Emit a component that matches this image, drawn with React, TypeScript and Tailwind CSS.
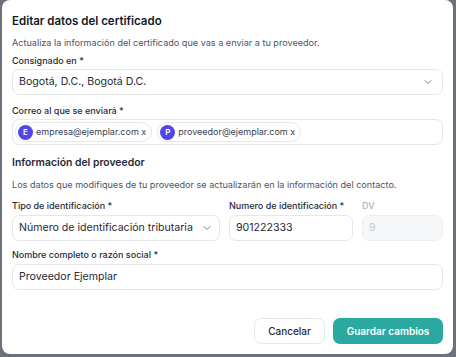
import React from 'react';

const ChevronDown = () => (
  <svg width="12" height="12" viewBox="0 0 24 24" fill="none" stroke="#6b7280" strokeWidth="1.8" strokeLinecap="round" strokeLinejoin="round">
    <path d="M6 9l6 6 6-6" />
  </svg>
);

const Chip = ({ letter, email }: { letter: string; email: string }) => (
  <div className="flex items-center gap-[3px] h-[20px] pl-[2px] pr-[5px] rounded-full border border-[#e5e7eb] bg-white">
    <span className="w-[15px] h-[15px] rounded-full bg-[#4f46e5] text-white text-[8px] font-semibold flex items-center justify-center">
      {letter}
    </span>
    <span className="text-[9px] text-[#374151]">{email} x</span>
  </div>
);

const Label = ({ children, muted }: { children: React.ReactNode; muted?: boolean }) => (
  <div className={`text-[9px] leading-[16px] font-medium ${muted ? 'text-[#b0b5bd]' : 'text-[#1f2937]'}`}>
    {children}
  </div>
);

export default function App() {
  return (
    <div className="w-[456px] h-[357px] bg-[#6c717a] overflow-hidden" style={{ fontFamily: 'Inter, "Noto Sans", sans-serif' }}>
      <div className="ml-[2px] w-[451px] h-[354px] bg-white rounded-[8px] px-[10px] pt-[11px] flex flex-col">
        <h2 className="text-[11.5px] leading-[20px] font-semibold text-[#111827]">Editar datos del certificado</h2>
        <p className="mt-[4px] text-[9.1px] leading-[16px] text-[#4b5563]">
          Actualiza la información del certificado que vas a enviar a tu proveedor.
        </p>

        <div className="mt-[2px]">
          <Label>Consignado en *</Label>
          <div className="h-[26px] border border-[#e5e7eb] rounded-[7px] flex items-center justify-between pl-[6px] pr-[8px]">
            <span className="text-[10.6px] text-[#1f2937]">Bogotá, D.C., Bogotá D.C.</span>
            <ChevronDown />
          </div>
        </div>

        <div className="mt-[8px]">
          <Label>Correo al que se enviará *</Label>
          <div className="h-[26px] border border-[#e5e7eb] rounded-[7px] flex items-center gap-[5px] pl-[2px]">
            <Chip letter="E" email="empresa@ejemplar.com" />
            <Chip letter="P" email="proveedor@ejemplar.com" />
          </div>
        </div>

        <h3 className="mt-[9px] text-[10.4px] leading-[18px] font-semibold text-[#1f2937]">Información del proveedor</h3>
        <p className="mt-[5px] text-[9.1px] leading-[16px] text-[#4b5563]">
          Los datos que modifiques de tu proveedor se actualizarán en la información del contacto.
        </p>

        <div className="mt-[5px] flex gap-[9px]">
          <div className="w-[208px]">
            <Label>Tipo de identificación *</Label>
            <div className="mt-px h-[26px] border border-[#e5e7eb] rounded-[7px] flex items-center justify-between pl-[6px] pr-[6px]">
              <span className="text-[10.6px] text-[#1f2937]">Número de identificación tributaria</span>
              <ChevronDown />
            </div>
          </div>
          <div className="w-[124px]">
            <Label>Numero de identificación *</Label>
            <div className="mt-px h-[26px] border border-[#e5e7eb] rounded-[7px] flex items-center pl-[6px]">
              <span className="text-[10.6px] text-[#1f2937]">901222333</span>
            </div>
          </div>
          <div className="flex-1">
            <Label muted>DV</Label>
            <div className="mt-px h-[26px] border border-[#eceef1] bg-[#f6f7f9] rounded-[7px] flex items-center pl-[6px]">
              <span className="text-[10.6px] text-[#c4c8ce]">9</span>
            </div>
          </div>
        </div>

        <div className="mt-[6px]">
          <Label>Nombre completo o razón social *</Label>
          <div className="mt-px h-[26px] border border-[#e5e7eb] rounded-[7px] flex items-center pl-[6px]">
            <span className="text-[10.6px] text-[#1f2937]">Proveedor Ejemplar</span>
          </div>
        </div>

        <div className="mt-[28px] flex justify-end gap-[8px]">
          <button className="h-[26px] w-[71px] rounded-[7px] border border-[#e5e7eb] bg-white text-[10px] font-medium text-[#1f2937]">
            Cancelar
          </button>
          <button className="h-[26px] w-[110px] rounded-[7px] bg-[#2ba9a0] text-[10px] font-semibold text-white">
            Guardar cambios
          </button>
        </div>
      </div>
    </div>
  );
}
